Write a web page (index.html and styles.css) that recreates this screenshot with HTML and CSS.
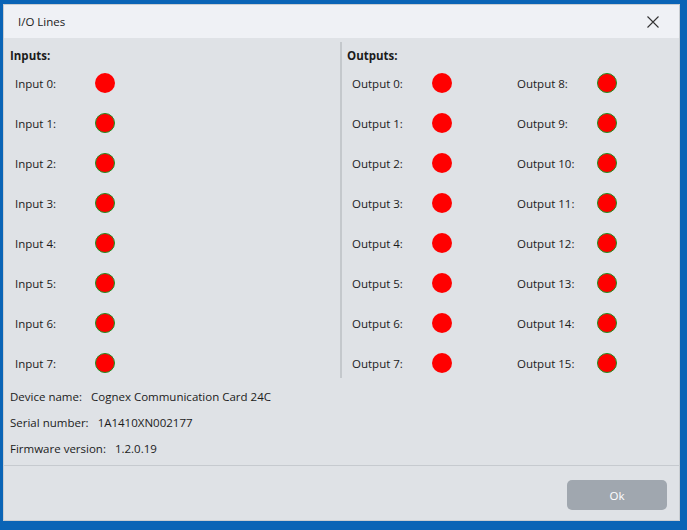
FILE: index.html
```html
<!DOCTYPE html>
<html>
<head>
<meta charset="utf-8">
<link rel="stylesheet" href="styles.css">
</head>
<body>
<div class="screen">
  <div class="dialog">
    <div class="titlebar">
      <span class="title">I/O Lines</span>
      <svg class="close" width="12" height="12" viewBox="0 0 12 12"><path d="M0.5 0.5 L11.5 11.5 M11.5 0.5 L0.5 11.5" stroke="#333" stroke-width="1.1" fill="none"/></svg>
    </div>
    <div class="io">
      <div class="col inputs">
        <div class="heading">Inputs:</div>
        <div class="grid one">
          <div class="line"><span class="lbl">Input 0:</span><span class="led"></span></div>
          <div class="line"><span class="lbl">Input 1:</span><span class="led g"></span></div>
          <div class="line"><span class="lbl">Input 2:</span><span class="led g"></span></div>
          <div class="line"><span class="lbl">Input 3:</span><span class="led g"></span></div>
          <div class="line"><span class="lbl">Input 4:</span><span class="led g"></span></div>
          <div class="line"><span class="lbl">Input 5:</span><span class="led g"></span></div>
          <div class="line"><span class="lbl">Input 6:</span><span class="led g"></span></div>
          <div class="line"><span class="lbl">Input 7:</span><span class="led g"></span></div>
        </div>
      </div>
      <div class="col outputs">
        <div class="heading">Outputs:</div>
        <div class="grid two">
          <div class="line"><span class="lbl">Output 0:</span><span class="led"></span></div>
          <div class="line"><span class="lbl">Output 8:</span><span class="led g"></span></div>
          <div class="line"><span class="lbl">Output 1:</span><span class="led"></span></div>
          <div class="line"><span class="lbl">Output 9:</span><span class="led g"></span></div>
          <div class="line"><span class="lbl">Output 2:</span><span class="led"></span></div>
          <div class="line"><span class="lbl">Output 10:</span><span class="led g"></span></div>
          <div class="line"><span class="lbl">Output 3:</span><span class="led"></span></div>
          <div class="line"><span class="lbl">Output 11:</span><span class="led g"></span></div>
          <div class="line"><span class="lbl">Output 4:</span><span class="led"></span></div>
          <div class="line"><span class="lbl">Output 12:</span><span class="led g"></span></div>
          <div class="line"><span class="lbl">Output 5:</span><span class="led"></span></div>
          <div class="line"><span class="lbl">Output 13:</span><span class="led g"></span></div>
          <div class="line"><span class="lbl">Output 6:</span><span class="led"></span></div>
          <div class="line"><span class="lbl">Output 14:</span><span class="led g"></span></div>
          <div class="line"><span class="lbl">Output 7:</span><span class="led"></span></div>
          <div class="line"><span class="lbl">Output 15:</span><span class="led g"></span></div>
        </div>
      </div>
    </div>
    <div class="info">
      <div class="inforow"><span class="k">Device name:</span><span>Cognex Communication Card 24C</span></div>
      <div class="inforow"><span class="k">Serial number:</span><span>1A1410XN002177</span></div>
      <div class="inforow"><span class="k">Firmware version:</span><span>1.2.0.19</span></div>
    </div>
    <div class="footer">
      <button class="ok">Ok</button>
    </div>
  </div>
</div>
</body>
</html>
```
FILE: styles.css
```css
html, body {
  margin: 0;
  padding: 0;
}
body {
  font-family: "Open Sans", "Noto Sans", sans-serif;
  font-size: 11.5px;
  color: #1b1b1b;
}
.screen {
  width: 687px;
  height: 530px;
  box-sizing: border-box;
  background: #0a64b6;
  padding: 4px 7px 9px 3px;
}
.dialog {
  height: 100%;
  box-sizing: border-box;
  display: flex;
  flex-direction: column;
  background: #dfe2e6;
  border: 1px solid #c9cdd1;
}
.titlebar {
  height: 33px;
  flex: none;
  background: #eff1f5;
  display: flex;
  align-items: center;
  justify-content: space-between;
  padding: 0 20px 0 14px;
}
.title {
  font-size: 11.5px;
}
.io {
  display: flex;
  height: 340px;
  flex: none;
}
.col {
  padding-top: 11px;
  box-sizing: border-box;
}
.inputs {
  width: 336px;
  padding-left: 6px;
}
.outputs {
  flex: 1;
  border-left: 2px solid #c4c8cc;
  margin-top: 4px;
  padding-top: 7px;
  padding-left: 5px;
  height: 336px;
}
.heading {
  font-weight: bold;
  line-height: 14px;
  height: 14px;
  margin-bottom: 10px;
}
.grid {
  display: grid;
  row-gap: 20px;
  padding-left: 5px;
}
.grid.two {
  grid-template-columns: 165px 100px;
}
.line {
  display: flex;
  align-items: center;
  height: 20px;
}
.lbl {
  width: 80px;
  flex: none;
}
.led {
  width: 20px;
  height: 20px;
  flex: none;
  border-radius: 50%;
  background: #ff0000;
  box-sizing: border-box;
}
.led.g {
  border: 1px solid #1f8f1f;
}
.info {
  padding: 6px 0 0 6px;
  flex: none;
}
.inforow {
  height: 26px;
  line-height: 26px;
  display: flex;
  gap: 9px;
}
.footer {
  flex: 1;
  border-top: 1px solid #c6cacf;
  margin-top: 3px;
  display: flex;
  justify-content: flex-end;
  align-items: flex-start;
  padding: 14px 12px 0 0;
}
.ok {
  width: 100px;
  height: 30px;
  border: none;
  border-radius: 5px;
  background: #a0a7af;
  color: #ffffff;
  font-family: inherit;
  font-size: 11.5px;
}
```
